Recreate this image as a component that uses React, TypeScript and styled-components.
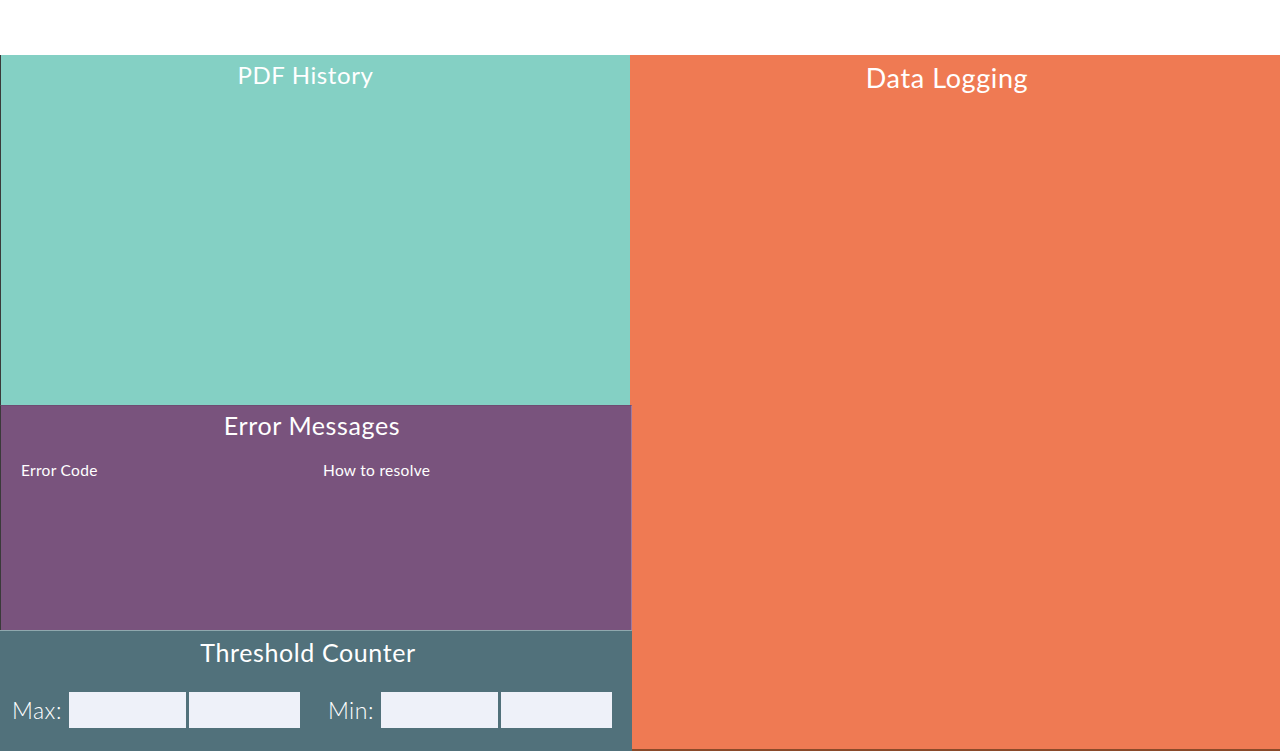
import React from "react";
import styled, { createGlobalStyle } from "styled-components";

const Global = createGlobalStyle`
  html, body { margin: 0; padding: 0; background: #ffffff; }
  body { font-family: "Lato", "Open Sans", sans-serif; }
  * { box-sizing: border-box; }
`;

const Page = styled.div`
  width: 1280px;
  height: 751px;
  display: grid;
  grid-template-rows: 55px 1fr;
  overflow: hidden;
`;

const Header = styled.div`
  background: #ffffff;
`;

const Main = styled.div`
  display: grid;
  grid-template-columns: 630px 1fr;
  min-height: 0;
`;

const LeftCol = styled.div`
  display: grid;
  grid-template-columns: 630px;
  grid-template-rows: 350px 225px 1fr;
  justify-items: start;
  min-height: 0;
  position: relative;
  z-index: 1;
`;

const Panel = styled.section<{ $bg: string }>`
  background: ${(p) => p.$bg};
  color: #ffffff;
  display: flex;
  flex-direction: column;
  min-height: 0;
`;

const TealPanel = styled(Panel)`
  border-left: 1px solid #3a3a3a;
  width: 630px;
`;

const PurplePanel = styled(Panel)`
  border-left: 1px solid #3a3a3a;
  border-right: 1px solid #a07a9e;
  border-top: 1px solid #6e4c72;
  width: 632px;
`;

const SlatePanel = styled(Panel)`
  border-top: 1px solid #8fa8ae;
  width: 632px;
`;

const Title = styled.h2<{ $size?: number; $shift?: number; $top?: number }>`
  margin: 0;
  padding-top: ${(p) => p.$top ?? 6}px;
  font-family: "Lato", "Open Sans", sans-serif;
  font-weight: 400;
  font-size: ${(p) => p.$size ?? 25}px;
  letter-spacing: 0.6px;
  line-height: 30px;
  text-align: center;
  transform: translateX(${(p) => p.$shift ?? 0}px);
`;

const ErrorHead = styled.div`
  display: grid;
  grid-template-columns: 302px 1fr;
  padding: 20px 0 0 20px;
  font-size: 15.5px;
  line-height: 20px;
  letter-spacing: 0.3px;
`;

const CounterRow = styled.div`
  display: flex;
  align-items: center;
  padding: 25px 0 0 12px;
`;

const Group = styled.div<{ $gap: number }>`
  display: flex;
  align-items: center;
  margin-right: ${(p) => p.$gap}px;
`;

const Label = styled.span`
  font-size: 23px;
  font-weight: 300;
  margin-right: 7px;
  letter-spacing: 0.5px;
`;

const Field = styled.input<{ $w: number }>`
  width: ${(p) => p.$w}px;
  height: 36px;
  border: none;
  outline: none;
  background: #eef1f9;
  margin-right: 3px;
  padding: 0;
`;

const OrangePanel = styled(Panel)`
  border-bottom: 2px solid #8a4a2a;
`;

export default function App() {
  return (
    <>
      <Global />
      <Page>
        <Header />
        <Main>
          <LeftCol>
            <TealPanel $bg="#84d0c4">
              <Title $size={24} $shift={-10} $top={5}>PDF History</Title>
            </TealPanel>
            <PurplePanel $bg="#79537d">
              <Title $shift={-4} $top={4}>Error Messages</Title>
              <ErrorHead>
                <span>Error Code</span>
                <span>How to resolve</span>
              </ErrorHead>
            </PurplePanel>
            <SlatePanel $bg="#51717b">
              <Title $shift={-8} $top={6}>Threshold Counter</Title>
              <CounterRow>
                <Group $gap={25}>
                  <Label>Max:</Label>
                  <Field $w={117} />
                  <Field $w={111} />
                </Group>
                <Group $gap={0}>
                  <Label>Min:</Label>
                  <Field $w={117} />
                  <Field $w={111} />
                </Group>
              </CounterRow>
            </SlatePanel>
          </LeftCol>
          <OrangePanel $bg="#ef7a53">
            <Title $size={27} $shift={-8} $top={8}>Data Logging</Title>
          </OrangePanel>
        </Main>
      </Page>
    </>
  );
}
